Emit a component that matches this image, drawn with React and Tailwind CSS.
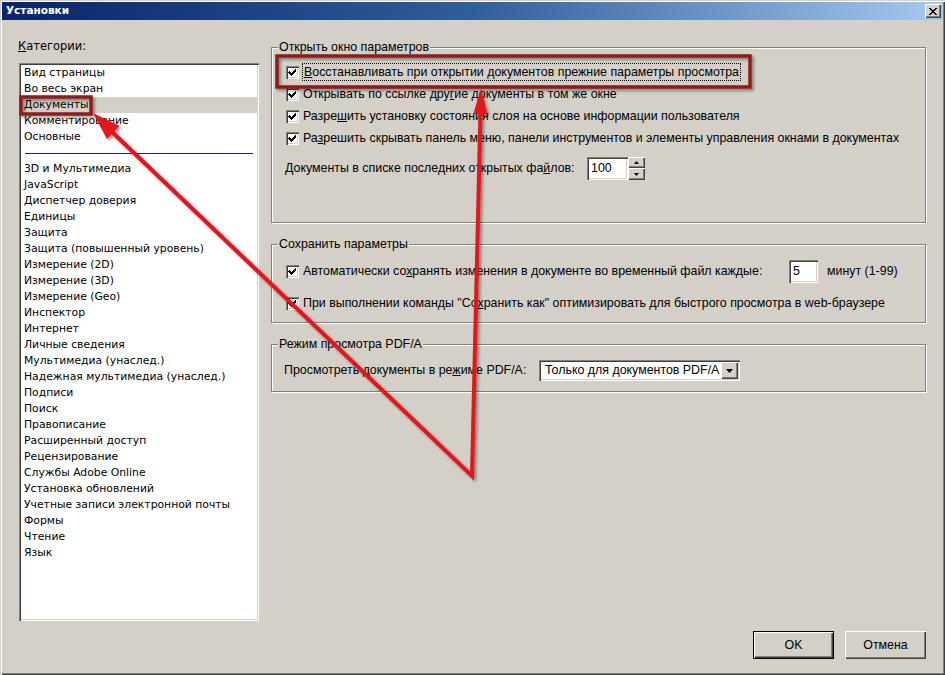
import React from 'react'

const raised = 'shadow-[inset_1px_1px_0_#ffffff,inset_-1px_-1px_0_#404040,inset_-2px_-2px_0_#808080]'
const sunken = 'shadow-[inset_1px_1px_0_#808080,inset_2px_2px_0_#404040,inset_-1px_-1px_0_#ffffff,inset_-2px_-2px_0_#d4d0c8]'

const topItems = ['Вид страницы', 'Во весь экран', 'Документы', 'Комментирование', 'Основные']
const bottomItems = [
  '3D и Мультимедиа',
  'JavaScript',
  'Диспетчер доверия',
  'Единицы',
  'Защита',
  'Защита (повышенный уровень)',
  'Измерение (2D)',
  'Измерение (3D)',
  'Измерение (Geo)',
  'Инспектор',
  'Интернет',
  'Личные сведения',
  'Мультимедиа (унаслед.)',
  'Надежная мультимедиа (унаслед.)',
  'Подписи',
  'Поиск',
  'Правописание',
  'Расширенный доступ',
  'Рецензирование',
  'Службы Adobe Online',
  'Установка обновлений',
  'Учетные записи электронной почты',
  'Формы',
  'Чтение',
  'Язык',
]

function Check() {
  return (
    <span className={`w-[13px] h-[13px] flex-shrink-0 bg-white flex items-center justify-center ${sunken}`}>
      <svg width="9" height="9" viewBox="0 0 9 9" shapeRendering="crispEdges">
        <path d="M1 3h1v1h1v1h1v-1h1v-1h1v-1h1v-1h1v3h-1v1h-1v1h-1v1h-1v1h-1v-1h-1v-1h-1v-1h-1z" fill="#000" />
      </svg>
    </span>
  )
}

function Group({ title, className, children }) {
  return (
    <div className={`relative border border-[#808080] shadow-[inset_1px_1px_0_#ffffff,1px_1px_0_#ffffff] ${className}`}>
      <span className="absolute -top-[8px] left-[6px] px-[1px] bg-[#d4d0c8] leading-[14px]">{title}</span>
      {children}
    </div>
  )
}

function CheckRow({ children }) {
  return (
    <div className="h-[22px] flex items-center gap-[4px] pl-[14px]">
      <Check />
      {children}
    </div>
  )
}

function Arrows() {
  return (
    <svg className="absolute inset-0 pointer-events-none" width="945" height="675" viewBox="0 0 945 675">
      <defs>
        <filter id="sh" x="-10%" y="-10%" width="120%" height="120%">
          <feDropShadow dx="2" dy="2" stdDeviation="1.5" floodColor="#000" floodOpacity="0.4" />
        </filter>
      </defs>
      <g filter="url(#sh)">
        <rect x="21" y="97" width="70" height="17" fill="none" stroke="#8e1b1b" strokeWidth="3.5" />
        <rect x="277" y="56" width="473" height="31" fill="none" stroke="#8e1b1b" strokeWidth="3.5" />
        <polyline points="480.5,110 472,476 110,130" fill="none" stroke="#e3151a" strokeWidth="4" strokeLinejoin="miter" />
        <polygon points="93,113 107,139 119.4,125.9" fill="#e3151a" />
        <polygon points="481,88 487.4,114.2 473.4,113.8" fill="#e3151a" />
      </g>
    </svg>
  )
}

export default function App() {
  return (
    <div
      className="relative w-[945px] h-[675px] overflow-hidden bg-[#d4d0c8] p-[2px] text-black shadow-[inset_1px_1px_0_#d4d0c8,inset_2px_2px_0_#ffffff,inset_-1px_-1px_0_#404040,inset_-2px_-2px_0_#808080]"
      style={{ fontFamily: '"Liberation Sans", Arial, sans-serif' }}
    >
      {/* Title bar */}
      <div className="h-[18px] flex items-center justify-between pl-[4px] pr-[2px] bg-linear-to-r from-[#0a246a] via-[#2f5f9a] to-[#a6caf0]">
        <span className="text-white font-bold text-[10.5px] font-['DejaVu_Sans']">Установки</span>
        <button className={`w-[16px] h-[14px] bg-[#d4d0c8] flex items-center justify-center ${raised}`}>
          <svg width="8" height="7" viewBox="0 0 8 7" shapeRendering="crispEdges">
            <path d="M0 0h2v1h1v1h2v-1h1v-1h2v1h-1v1h-1v1h-1v1h1v1h1v1h1v1h-2v-1h-1v-1h-2v1h-1v1h-2v-1h1v-1h1v-1h1v-1h-1v-1h-1v-1h-1z" fill="#000" />
          </svg>
        </button>
      </div>

      <div className="flex">
        {/* Categories */}
        <div className="ml-[17px] mt-[19px] w-[240px]">
          <div className="h-[14px] leading-[14px] text-[11.5px] font-['DejaVu_Sans'] -ml-[1px]">
            <u>К</u>атегории:
          </div>
          <div className={`mt-[10px] h-[558px] bg-white p-[2px] ${sunken} font-['DejaVu_Sans'] text-[10.8px]`}>
            {topItems.map((t) => (
              <div key={t} className={`h-[16px] leading-[16px] pl-[3px] whitespace-nowrap ${t === 'Документы' ? 'bg-[#d4d0c8]' : ''}`}>
                {t}
              </div>
            ))}
            <div className="h-[16px] flex items-center px-[4px]">
              <div className="h-[1px] w-full bg-[#1f2f5c]" />
            </div>
            {bottomItems.map((t) => (
              <div key={t} className="h-[16px] leading-[16px] pl-[3px] whitespace-nowrap">
                {t}
              </div>
            ))}
          </div>
        </div>

        {/* Settings */}
        <div className="ml-[12px] mt-[27px] w-[655px] text-[12.4px]">
          <Group title="Открыть окно параметров" className="h-[176px] pt-[13px]">
            <CheckRow>
              <span className="outline-1 outline-dotted outline-black px-[1px] whitespace-nowrap leading-[16px]">
                <u>В</u>осстанавливать при открытии документов прежние параметры просмотра
              </span>
            </CheckRow>
            <CheckRow>
              <span className="whitespace-nowrap">Открывать по ссылке дру<u>г</u>ие документы в том же окне</span>
            </CheckRow>
            <CheckRow>
              <span className="whitespace-nowrap">Разре<u>ш</u>ить установку состояния слоя на основе информации пользователя</span>
            </CheckRow>
            <CheckRow>
              <span className="whitespace-nowrap">Ра<u>з</u>решить скрывать панель меню, панели инструментов и элементы управления окнами в документах</span>
            </CheckRow>
            <div className="mt-[8px] h-[23px] flex items-center pl-[13px]">
              <span className="w-[302px] whitespace-nowrap">Документы в списке последних открытых фа<u>й</u>лов:</span>
              <span className={`w-[41px] h-[23px] bg-white flex items-center pl-[4px] ${sunken}`}>100</span>
              <span className="flex flex-col">
                <span className={`w-[17px] h-[11px] bg-[#d4d0c8] flex items-center justify-center ${raised}`}>
                  <svg width="5" height="3" viewBox="0 0 5 3"><path d="M2.5 0L5 3H0z" fill="#000" /></svg>
                </span>
                <span className={`w-[17px] h-[12px] bg-[#d4d0c8] flex items-center justify-center ${raised}`}>
                  <svg width="5" height="3" viewBox="0 0 5 3"><path d="M0 0h5L2.5 3z" fill="#000" /></svg>
                </span>
              </span>
            </div>
          </Group>

          <Group title="Сохранить параметры" className="mt-[21px] h-[79px] pt-[15px]">
            <div className="h-[23px] flex items-center gap-[4px] pl-[14px]">
              <Check />
              <span className="w-[482px] whitespace-nowrap">Автоматически со<u>х</u>ранять изменения в документе во временный файл каждые:</span>
              <span className={`w-[29px] h-[23px] bg-white flex items-center pl-[4px] ${sunken}`}>5</span>
              <span className="ml-[5px] whitespace-nowrap">минут (1-99)</span>
            </div>
            <div className="mt-[9px]">
              <CheckRow>
                <span className="whitespace-nowrap">При выполнении команды "Со<u>х</u>ранить как" оптимизировать для быстрого просмотра в web-браузере</span>
              </CheckRow>
            </div>
          </Group>

          <Group title="Режим просмотра PDF/A" className="mt-[21px] h-[48px] pt-[15px]">
            <div className="h-[21px] flex items-center pl-[12px]">
              <span className="w-[255px] whitespace-nowrap">Просмотреть документы в ре<u>ж</u>име PDF/A:</span>
              <span className={`w-[201px] h-[21px] bg-white flex items-center justify-between p-[2px] ${sunken}`}>
                <span className="pl-[4px] whitespace-nowrap">Только для документов PDF/A</span>
                <span className={`w-[17px] h-[17px] bg-[#d4d0c8] flex items-center justify-center ${raised}`}>
                  <svg width="7" height="4" viewBox="0 0 7 4"><path d="M0 0h7L3.5 4z" fill="#000" /></svg>
                </span>
              </span>
            </div>
          </Group>
        </div>
      </div>

      {/* Buttons */}
      <div className="mt-[10px] flex justify-end gap-[11px] pr-[17px] text-[12.4px]">
        <button className={`w-[81px] h-[28px] border border-black bg-[#d4d0c8] ${raised}`}>OK</button>
        <button className={`w-[81px] h-[28px] bg-[#d4d0c8] ${raised}`}>Отмена</button>
      </div>

      <Arrows />
    </div>
  )
}
